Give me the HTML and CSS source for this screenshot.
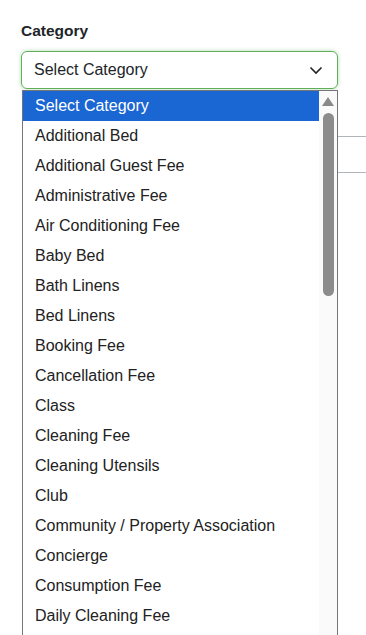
FILE: index.html
```html
<!doctype html>
<html>
<head>
	<title>Category</title>
	<link rel="stylesheet" href="styles.css">
</head>
<body>
	<div class="field">
		<label class="field-label">Category</label>
		<div class="select">
			<span>Select Category</span>
			<svg class="chevron" width="14" height="9" viewBox="0 0 14 9"><path d="M1.5 1.5 L7 7 L12.5 1.5" fill="none" stroke="#222" stroke-width="1.6"/></svg>
		</div>

		<div class="rule"></div>

		<div class="listbox">
			<ul class="options">
				<li class="selected">Select Category</li>
				<li>Additional Bed</li>
				<li>Additional Guest Fee</li>
				<li>Administrative Fee</li>
				<li>Air Conditioning Fee</li>
				<li>Baby Bed</li>
				<li>Bath Linens</li>
				<li>Bed Linens</li>
				<li>Booking Fee</li>
				<li>Cancellation Fee</li>
				<li>Class</li>
				<li>Cleaning Fee</li>
				<li>Cleaning Utensils</li>
				<li>Club</li>
				<li>Community / Property Association</li>
				<li>Concierge</li>
				<li>Consumption Fee</li>
				<li>Daily Cleaning Fee</li>
			</ul>
			<div class="scrollbar">
				<div class="arrow-up"></div>
				<div class="thumb"></div>
			</div>
		</div>
	</div>
</body>
</html>
```

FILE: styles.css
```css
html, body {
	margin: 0;
	height: 100%;
	overflow: hidden;
	background: #fff;
}

body {
	font-family: "Liberation Sans", Arial, sans-serif;
	color: #222;
}

.field {
	position: relative;
	padding: 22px 28px 0 21px;
}

.field-label {
	display: block;
	font-size: 15.5px;
	line-height: 17px;
	font-weight: bold;
	color: #212529;
	margin-bottom: 12px;
}

.select {
	height: 36px;
	border: 1px solid #5fae5a;
	border-radius: 6px;
	box-shadow: 0 0 4px rgba(95, 174, 90, 0.45);
	display: flex;
	align-items: center;
	justify-content: space-between;
	padding: 0 14px 0 12px;
	font-size: 16px;
	color: #212529;
}

.chevron {
	display: block;
}

.rule {
	margin: 47px -28px 0 60px;
	height: 35px;
	border-top: 1px solid #b0b5ba;
	border-bottom: 1px solid #b0b5ba;
}

.listbox {
	position: absolute;
	left: 22px;
	top: 90px;
	width: 314px;
	height: 560px;
	border: 1px solid #767676;
	background: #fff;
	display: flex;
	overflow: hidden;
}

.options {
	list-style: none;
	margin: 0;
	padding: 0;
	flex: 1;
}

.options li {
	height: 30px;
	line-height: 30px;
	padding-left: 12px;
	font-size: 16px;
	color: #222;
	white-space: nowrap;
}

.options li.selected {
	background: #1a66d2;
	color: #fff;
}

.scrollbar {
	width: 18px;
	background: #fafafa;
	display: flex;
	flex-direction: column;
	align-items: center;
}

.arrow-up {
	margin-top: 6px;
	width: 0;
	height: 0;
	border-left: 6px solid transparent;
	border-right: 6px solid transparent;
	border-bottom: 9px solid #8a8a8a;
}

.thumb {
	margin-top: 7px;
	width: 11px;
	height: 183px;
	border-radius: 6px;
	background: #8c8c8c;
}
```
